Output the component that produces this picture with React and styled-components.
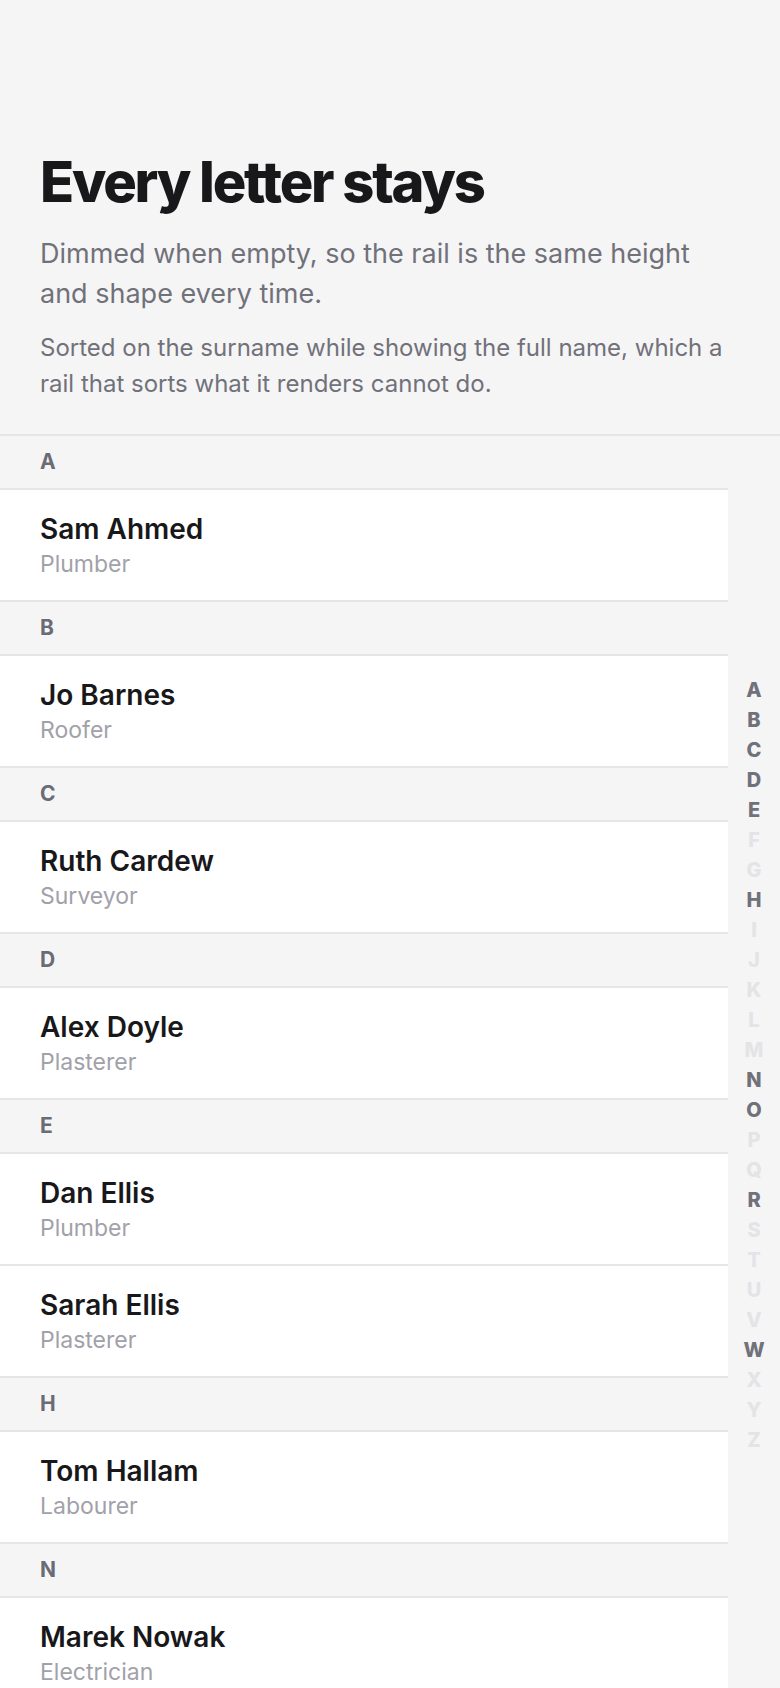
import React from 'react';
import styled, { createGlobalStyle } from 'styled-components';

const GlobalStyle = createGlobalStyle`
  html, body {
    margin: 0;
    padding: 0;
    background: #f5f5f6;
  }
  * {
    box-sizing: border-box;
  }
`;

const Page = styled.div`
  display: flex;
  flex-direction: column;
  height: 100vh;
  background: #f5f5f6;
  font-family: Inter, "Noto Sans", sans-serif;
  color: #18181b;
`;

const Intro = styled.header`
  padding: 152px 40px 32px;
`;

const Title = styled.h1`
  margin: 0;
  font-size: 56px;
  line-height: 1.1;
  font-weight: 800;
  letter-spacing: -0.04em;
  color: #18181b;
`;

const Lead = styled.p`
  margin: 20px 0 0;
  font-size: 27px;
  line-height: 40px;
  color: #71717a;
`;

const Note = styled.p`
  margin: 16px 0 0;
  font-size: 24px;
  line-height: 36px;
  color: #71717a;
`;

const Body = styled.div`
  flex: 1;
  min-height: 0;
  display: flex;
  border-top: 2px solid #e6e6e8;
`;

const List = styled.div`
  flex: 1;
  overflow-y: auto;
  scrollbar-width: none;
  &::-webkit-scrollbar {
    display: none;
  }
`;

const SectionHead = styled.div`
  height: 54px;
  display: flex;
  align-items: center;
  padding: 0 40px;
  border-bottom: 2px solid #e6e6e8;
  background: #f5f5f6;
  font-size: 21px;
  font-weight: 700;
  color: #6b6b76;
`;

const Row = styled.div`
  height: 112px;
  padding: 22px 40px 0;
  background: #fff;
  border-bottom: 2px solid #e6e6e8;
`;

const Name = styled.div`
  font-size: 28px;
  line-height: 34px;
  font-weight: 600;
  color: #18181b;
`;

const Role = styled.div`
  margin-top: 4px;
  font-size: 23px;
  line-height: 28px;
  color: #a1a1aa;
`;

const Rail = styled.nav`
  width: 52px;
  flex-shrink: 0;
  display: flex;
  flex-direction: column;
  justify-content: center;
  align-items: center;
  padding-top: 6px;
`;

const RailLetter = styled.button`
  height: 30px;
  width: 100%;
  padding: 0;
  border: 0;
  background: none;
  font-family: Inter, "Noto Sans", sans-serif;
  font-size: 20px;
  font-weight: 800;
  color: ${(p) => (p.$empty ? '#e4e4e7' : '#71717a')};
  cursor: ${(p) => (p.$empty ? 'default' : 'pointer')};
`;

const people = [
  { first: 'Sam', last: 'Ahmed', job: 'Plumber' },
  { first: 'Jo', last: 'Barnes', job: 'Roofer' },
  { first: 'Ruth', last: 'Cardew', job: 'Surveyor' },
  { first: 'Alex', last: 'Doyle', job: 'Plasterer' },
  { first: 'Dan', last: 'Ellis', job: 'Plumber' },
  { first: 'Sarah', last: 'Ellis', job: 'Plasterer' },
  { first: 'Tom', last: 'Hallam', job: 'Labourer' },
  { first: 'Marek', last: 'Nowak', job: 'Electrician' },
  { first: 'Lena', last: 'Osei', job: 'Glazier' },
  { first: 'Ben', last: 'Reid', job: 'Joiner' },
  { first: 'Kate', last: 'Walsh', job: 'Painter' },
];

const ALPHABET = 'ABCDEFGHIJKLMNOPQRSTUVWXYZ'.split('');

export default function App() {
  const sorted = [...people].sort((a, b) =>
    a.last === b.last ? a.first.localeCompare(b.first) : a.last.localeCompare(b.last)
  );
  const groups = {};
  sorted.forEach((p) => {
    const key = p.last[0].toUpperCase();
    (groups[key] = groups[key] || []).push(p);
  });

  return (
    <Page>
      <GlobalStyle />
      <Intro>
        <Title>Every letter stays</Title>
        <Lead>Dimmed when empty, so the rail is the same height and shape every time.</Lead>
        <Note>
          Sorted on the surname while showing the full name, which a rail that sorts what it
          renders cannot do.
        </Note>
      </Intro>
      <Body>
        <List>
          {Object.keys(groups).map((letter) => (
            <section key={letter} id={`letter-${letter}`}>
              <SectionHead>{letter}</SectionHead>
              {groups[letter].map((p) => (
                <Row key={p.first + p.last}>
                  <Name>
                    {p.first} {p.last}
                  </Name>
                  <Role>{p.job}</Role>
                </Row>
              ))}
            </section>
          ))}
        </List>
        <Rail>
          {ALPHABET.map((l) => (
            <RailLetter key={l} $empty={!groups[l]}>
              {l}
            </RailLetter>
          ))}
        </Rail>
      </Body>
    </Page>
  );
}
